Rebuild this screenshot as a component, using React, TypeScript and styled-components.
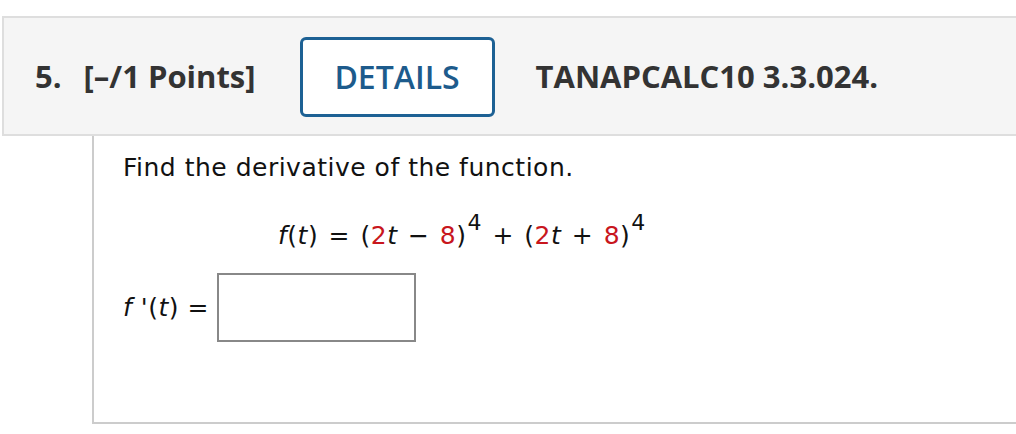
import React from "react";
import styled, { createGlobalStyle } from "styled-components";

const Global = createGlobalStyle`
  html, body { margin: 0; padding: 0; background: #ffffff; }
  body { overflow: hidden; }
`;

const Page = styled.div`
  width: 1016px;
  height: 434px;
  padding-top: 16px;
  box-sizing: border-box;
`;

const Header = styled.div`
  margin-left: 2px;
  width: 1040px;
  height: 120px;
  box-sizing: border-box;
  background: #f5f5f5;
  border: 2px solid #dedede;
  border-right: none;
  display: flex;
  align-items: center;
  padding-left: 31px;
  font-family: "Open Sans", "Liberation Sans", sans-serif;
  font-weight: 700;
  font-size: 31px;
  color: #333333;
`;

const Num = styled.span`
  margin-right: 22px;
`;

const Points = styled.span`
  margin-right: 44px;
`;

const DetailsButton = styled.button`
  width: 195px;
  height: 80px;
  box-sizing: border-box;
  border: 3.5px solid #1d6194;
  border-radius: 6px;
  background: #ffffff;
  color: #1d5b8c;
  font-family: "Open Sans", "Liberation Sans", sans-serif;
  font-weight: 600;
  font-size: 32px;
  padding: 0;
  margin-right: 41px;
  margin-top: 1px;
  cursor: pointer;
`;

const Code = styled.span``;

const Body = styled.div`
  margin-left: 92px;
  height: 288px;
  box-sizing: border-box;
  border-left: 2px solid #cccccc;
  border-bottom: 2px solid #cccccc;
  padding-left: 29px;
  padding-top: 18px;
  font-family: "DejaVu Sans", Verdana, sans-serif;
  font-size: 25px;
  letter-spacing: 0.5px;
  color: #111111;
`;

const Prompt = styled.div`
  line-height: 28px;
`;

const Equation = styled.div`
  margin-left: 155px;
  margin-top: 40px;
  line-height: 28px;
  white-space: pre;
  word-spacing: 2px;
`;

const Var = styled.i``;

const Red = styled.span`
  color: #c8161d;
`;

const Sup = styled.sup`
  font-size: 22px;
  vertical-align: 0;
  position: relative;
  top: -14px;
  margin-left: 1px;
`;

const AnswerRow = styled.div`
  display: flex;
  align-items: center;
  margin-top: 22px;
`;

const AnswerLabel = styled.span`
  white-space: pre;
  margin-right: 8px;
`;

const AnswerInput = styled.input`
  width: 199px;
  height: 69px;
  box-sizing: border-box;
  border: 2px solid #888888;
  background: #ffffff;
  outline: none;
`;

export default function App() {
  return (
    <Page>
      <Global />
      <Header>
        <Num>5.</Num>
        <Points>[–/1 Points]</Points>
        <DetailsButton>DETAILS</DetailsButton>
        <Code>TANAPCALC10 3.3.024.</Code>
      </Header>
      <Body>
        <Prompt>Find the derivative of the function.</Prompt>
        <Equation>
          <Var>f</Var>(<Var>t</Var>) = (<Red>2</Red>
          <Var>t</Var> − <Red>8</Red>)<Sup>4</Sup> + (<Red>2</Red>
          <Var>t</Var> + <Red>8</Red>)<Sup>4</Sup>
        </Equation>
        <AnswerRow>
          <AnswerLabel>
            <Var>f</Var> '(<Var>t</Var>) =
          </AnswerLabel>
          <AnswerInput type="text" />
        </AnswerRow>
      </Body>
    </Page>
  );
}
